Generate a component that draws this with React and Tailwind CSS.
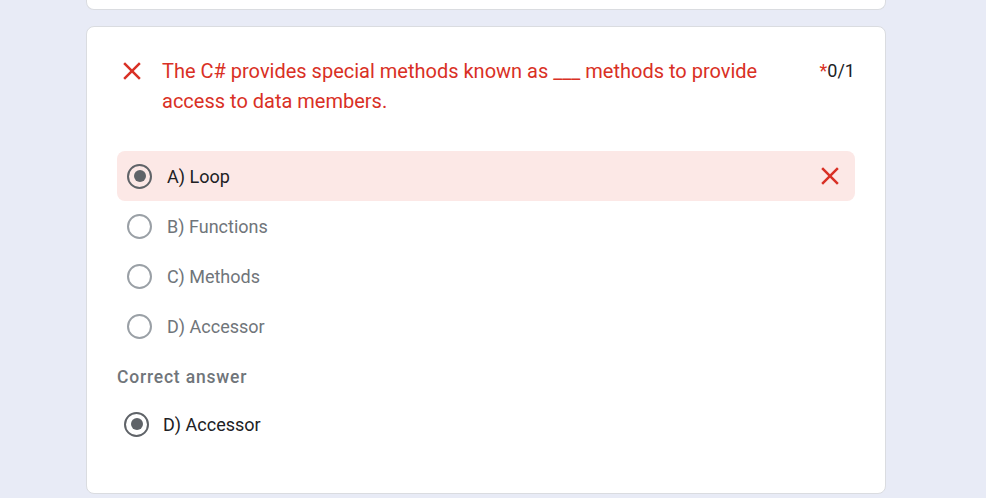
import React from 'react'

function CloseIcon({ className }) {
  return (
    <svg viewBox="0 0 24 24" className={className} fill="currentColor">
      <path d="M19 6.41 17.59 5 12 10.59 6.41 5 5 6.41 10.59 12 5 17.59 6.41 19 12 13.41 17.59 19 19 17.59 13.41 12z" />
    </svg>
  )
}

function Radio({ checked, muted }) {
  return (
    <div className={`w-[25px] h-[25px] rounded-full border-[2.5px] flex items-center justify-center flex-shrink-0 ${muted ? 'border-[#9aa0a6]' : 'border-[#5f6368]'}`}>
      {checked && <div className="w-[12px] h-[12px] rounded-full bg-[#5f6368]" />}
    </div>
  )
}

export default function App() {
  const options = [
    { label: 'A) Loop', picked: true },
    { label: 'B) Functions' },
    { label: 'C) Methods' },
    { label: 'D) Accessor' },
  ]

  return (
    <div className="w-[986px] h-[498px] overflow-hidden bg-[#e8ebf6] flex flex-col" style={{ fontFamily: 'Roboto, "Liberation Sans", sans-serif' }}>

      {/* previous card (cut off) */}
      <div className="ml-[86px] w-[800px] h-[10px] bg-white border border-t-0 border-[#dadce0] rounded-b-lg flex-shrink-0" />

      {/* question card */}
      <div className="ml-[86px] w-[800px] mt-[16px] bg-white border border-[#dadce0] rounded-lg px-[30px] pt-[29px] pb-[44px] flex-shrink-0">

        <div className="flex items-start">
          <CloseIcon className="w-[30px] h-[30px] text-[#d93025] flex-shrink-0" />
          <p className="ml-[15px] flex-1 text-[20px] leading-[30px] text-[#d93025] pr-6">
            The C# provides special methods known as ___ methods to provide access to data members.
          </p>
          <p className="text-[18px] leading-[30px] text-[#202124] whitespace-nowrap">
            <span className="text-[#d93025]">*</span>0/1
          </p>
        </div>

        <div className="mt-[35px] flex flex-col">
          {options.map(o => (
            <div key={o.label}
              className={`h-[50px] flex items-center pl-[10px] pr-[10px] rounded-lg ${o.picked ? 'bg-[#fce8e6]' : ''}`}>
              <Radio checked={o.picked} muted={!o.picked} />
              <span className={`ml-[15px] flex-1 text-[18px] ${o.picked ? 'text-[#202124]' : 'text-[#70757a]'}`}>{o.label}</span>
              {o.picked && <CloseIcon className="w-[30px] h-[30px] text-[#d93025]" />}
            </div>
          ))}
        </div>

        <p className="mt-[14px] text-[17.5px] leading-[25px] font-medium tracking-[0.8px] text-[#70757a]">Correct answer</p>

        <div className="mt-[9px] h-[50px] flex items-center pl-[7px]">
          <Radio checked />
          <span className="ml-[14px] text-[18px] text-[#202124]">D) Accessor</span>
        </div>
      </div>
    </div>
  )
}
